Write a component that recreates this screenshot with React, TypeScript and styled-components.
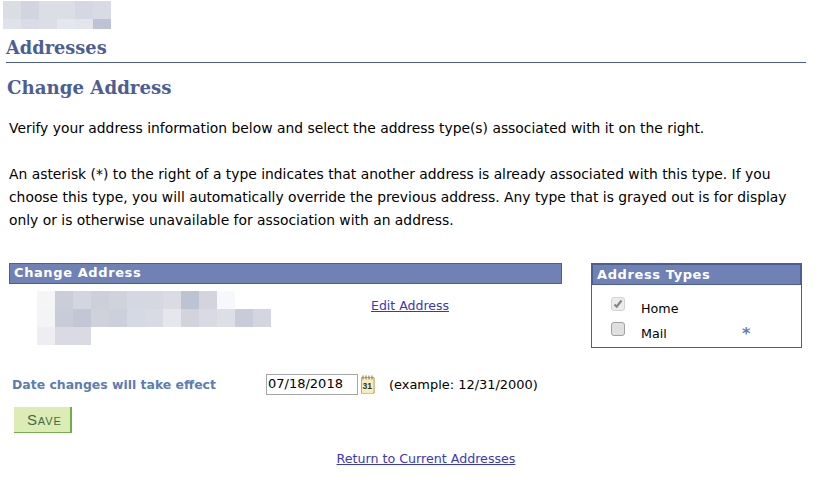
import React from "react";
import styled, { createGlobalStyle } from "styled-components";

const Global = createGlobalStyle`
  html, body { margin: 0; padding: 0; background: #fff; }
  body { font-family: "DejaVu Sans", Verdana, sans-serif; font-size: 13px; color: #000; }
`;

const Page = styled.div`
  width: 825px;
  height: 483px;
  overflow: hidden;
  display: flex;
  flex-direction: column;
  box-sizing: border-box;
  padding-top: 1px;
`;

const Mosaic = styled.div<{ $cols: number; $w: number; $h: number }>`
  display: grid;
  grid-template-columns: repeat(${(p) => p.$cols}, ${(p) => p.$w}px);
  grid-auto-rows: ${(p) => p.$h}px;
`;

const TopMosaic = styled.div`
  display: flex;
  flex-direction: column;
  margin-left: 3px;
  height: 28px;
`;

const TileRow = styled.div<{ $h: number }>`
  display: flex;
  height: ${(p) => p.$h}px;
`;

const Tile = styled.span<{ $c: string }>`
  width: 18px;
  height: 100%;
  background: ${(p) => p.$c};
`;

const PageTitle = styled.h1`
  margin: 8px 19px 0 6px;
  padding-bottom: 3px;
  border-bottom: 1px solid #4d5e94;
  font: bold 17.8px/22px "DejaVu Serif", Georgia, serif;
  color: #4d5e94;
`;

const SubTitle = styled.h2`
  margin: 12px 0 0 7px;
  font: bold 18.2px/26px "DejaVu Serif", Georgia, serif;
  color: #4d5e94;
`;

const Para = styled.p`
  margin: 0 30px 0 9px;
  font-size: 13.86px;
  line-height: 23px;
`;

const Intro = styled(Para)`
  margin-top: 16px;
`;

const Notice = styled(Para)`
  margin-top: 23px;
`;

const Columns = styled.div`
  display: flex;
  align-items: flex-start;
  margin: 31px 23px 0 9px;
  justify-content: space-between;
`;

const Left = styled.section`
  width: 553px;
`;

const BarTitle = styled.div`
  box-sizing: border-box;
  height: 21px;
  padding-left: 4px;
  background: #7081b5;
  border: 1px solid #4d5e94;
  color: #fff;
  font-weight: bold;
  font-size: 13px;
  line-height: 18px;
  letter-spacing: 0.6px;
`;

const AddressRow = styled.div`
  display: flex;
  align-items: flex-start;
  padding: 7px 0 0 28px;
`;

const AddressBlur = styled(Mosaic)`
  width: 334px;
`;

const EditLink = styled.a`
  color: #3a36c4;
  text-decoration: underline;
  font-size: 12.5px;
  line-height: 16px;
`;

const AddressEdit = styled(EditLink)`
  margin-top: 7px;
`;

const TypesBox = styled.aside`
  width: 211px;
  box-sizing: border-box;
  border: 1px solid #4d5e94;
  height: 85px;
  background: #fff;
`;

const TypesTitle = styled.div`
  height: 21px;
  box-sizing: border-box;
  background: #7081b5;
  border: 1px solid #4d5e94;
  padding-left: 4px;
  color: #fff;
  font-weight: bold;
  font-size: 13px;
  line-height: 20px;
  letter-spacing: 0.6px;
`;

const TypesList = styled.div`
  padding: 12px 0 0 19px;
  display: flex;
  flex-direction: column;
  gap: 11px;
`;

const TypeRow = styled.label`
  display: flex;
  align-items: flex-start;
  height: 14px;
  font-size: 13px;
  color: #000;
`;

const Check = styled.span<{ $disabled?: boolean }>`
  box-sizing: border-box;
  width: 14px;
  height: 14px;
  border: ${(p) => (p.$disabled ? "1px solid #d2d2d2" : "1.5px solid #a0a0a0")};
  border-radius: 3px;
  background: ${(p) => (p.$disabled ? "#ececec" : "#e0e0e0")};
  display: flex;
  align-items: center;
  justify-content: center;
`;

const TypeName = styled.span`
  margin: 4px 0 0 16px;
  width: 102px;
  line-height: 16px;
  font-size: 12.7px;
`;

const Star = styled.span`
  color: #5d7fb8;
  line-height: 16px;
  margin: 4px 0 0 -1px;
  font-size: 16px;
  font-weight: bold;
`;

const DateRow = styled.div`
  display: flex;
  align-items: center;
  margin: 25px 0 0 12px;
  height: 22px;
`;

const DateLabel = styled.label`
  width: 254px;
  color: #5a7db3;
  font-weight: bold;
  font-size: 12.45px;
`;

const DateInput = styled.div`
  box-sizing: border-box;
  width: 92px;
  height: 21px;
  border: 1px solid #a6a6a6;
  padding-left: 1px;
  font-size: 13px;
  line-height: 18px;
`;

const CalIcon = styled.svg`
  margin-left: 2px;
  flex: none;
`;

const Example = styled.span`
  margin-left: 13px;
  font-size: 12.95px;
`;

const SaveButton = styled.button`
  align-self: flex-start;
  margin: 12px 0 0 14px;
  box-sizing: border-box;
  width: 58px;
  height: 26px;
  padding: 0 0 0 13px;
  border: 0;
  border-right: 2px solid #6fae4f;
  border-bottom: 1px solid #6fae4f;
  background: #dcecb4;
  color: #3f6b4a;
  font-family: "Liberation Sans", Arial, sans-serif;
  font-size: 15px;
  font-variant: small-caps;
  letter-spacing: 0.85px;
  text-align: left;
`;

const ReturnRow = styled.div`
  display: flex;
  justify-content: center;
  margin: 18px 0 0 27px;
`;

const ReturnLink = styled(EditLink)`
  font-size: 12.65px;
`;

const top = [
  ["#dbdde5", "#d2d5df", "#dcdee6", "#dcdee6", "#d5d7e2", "#d8dae4"],
  ["#e0e2ea", "#d9dce6", "#dcdee6", "#e5e7ee", "#e3e5eb", "#bdc2d6"],
];

const addr = [
  "#f5f5f7 #cbced9 #d3d6e1 #cdcfdb #d0d2dc #d5d8e3 #d5d7e1 #dadbe3 #bcc4d4 #d3d4dd #f6f8fb".split(" "),
  "#f4f4f6 #c8ccd9 #c3c7d5 #cfd1db #ccd0dc #d4d9e4 #d9dae4 #e6e7ec #d2d3dd #d9dae3 #dddfe6 #c8ccd9 #d3d5e0".split(" "),
  "#eeeef2 #d9dae3 #d9dae3".split(" "),
];

export default function App() {
  return (
    <Page>
      <Global />
      <TopMosaic>
        <TileRow $h={18}>{top[0].map((c, i) => <Tile key={i} $c={c} />)}</TileRow>
        <TileRow $h={10}>{top[1].map((c, i) => <Tile key={i} $c={c} />)}</TileRow>
      </TopMosaic>
      <PageTitle>Addresses</PageTitle>
      <SubTitle>Change Address</SubTitle>
      <Intro>Verify your address information below and select the address type(s) associated with it on the right.</Intro>
      <Notice>
        An asterisk (*) to the right of a type indicates that another address is already associated with this type. If you choose this type, you will automatically override the previous address. Any type that is grayed out is for display only or is otherwise unavailable for association with an address.
      </Notice>
      <Columns>
        <Left>
          <BarTitle>Change Address</BarTitle>
          <AddressRow>
            <AddressBlur $cols={13} $w={18} $h={18}>
              {addr.flatMap((row, r) => row.map((c, i) => <Tile key={`${r}-${i}`} $c={c} />).concat(
                r < 2 ? Array.from({ length: 13 - row.length }, (_, i) => <Tile key={`${r}-e${i}`} $c="transparent" />) : []
              ))}
            </AddressBlur>
            <AddressEdit href="#">Edit Address</AddressEdit>
          </AddressRow>
        </Left>
        <TypesBox>
          <TypesTitle>Address Types</TypesTitle>
          <TypesList>
            <TypeRow>
              <Check $disabled>
                <svg width="10" height="10" viewBox="0 0 10 10"><path d="M1.5 5.5l2.2 2.2L8.5 1.5" fill="none" stroke="#858585" strokeWidth="2.2" /></svg>
              </Check>
              <TypeName>Home</TypeName>
            </TypeRow>
            <TypeRow>
              <Check />
              <TypeName>Mail</TypeName>
              <Star>*</Star>
            </TypeRow>
          </TypesList>
        </TypesBox>
      </Columns>
      <DateRow>
        <DateLabel>Date changes will take effect</DateLabel>
        <DateInput>07/18/2018</DateInput>
        <CalIcon width="16" height="19" viewBox="0 0 16 19">
          <path d="M1.5 2.5h12.5v14.5l-1.5 1.5h-11z" fill="#f6ecbf" stroke="#c7a96c" />
          <path d="M14.5 3v15M2 18.5h12" stroke="#d8c18f" />
          <path d="M3 0.5v4M6 0.5v4M9 0.5v4M12 0.5v4" stroke="#9d8450" strokeWidth="1.2" />
          <text x="2.6" y="14" fontSize="8.5" fontWeight="bold" fontFamily="Liberation Sans" fill="#33302a">31</text>
        </CalIcon>
        <Example>(example: 12/31/2000)</Example>
      </DateRow>
      <SaveButton type="button">Save</SaveButton>
      <ReturnRow><ReturnLink href="#">Return to Current Addresses</ReturnLink></ReturnRow>
    </Page>
  );
}
